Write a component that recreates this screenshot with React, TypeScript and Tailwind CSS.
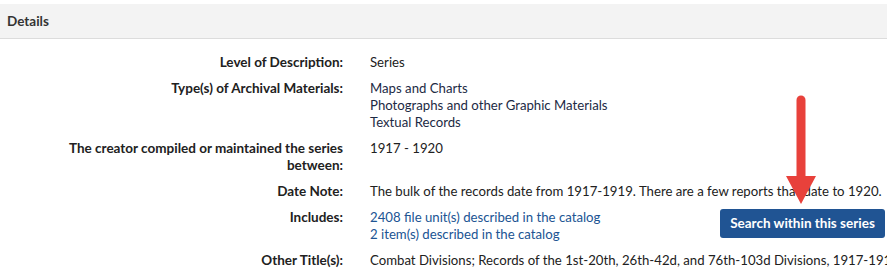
import React from "react";

export default function App() {
  const font = { fontFamily: 'Lato, "Noto Sans", sans-serif' };
  return (
    <div className="relative w-[887px] h-[272px] overflow-hidden bg-white text-[13.2px] leading-[17px] text-[#212121]" style={font}>
      <div className="pt-[4px]">
        <div className="h-[35px] bg-[#f3f3f3] border-b border-[#dcdcdc] flex items-center pl-[7px] pt-[1px] font-bold text-[13.5px] text-[#333]">
          Details
        </div>
      </div>
      <div className="grid grid-cols-[343px_minmax(0,1fr)] gap-x-[27px] gap-y-[9px] pt-[15px]">
        <div className="text-right font-bold text-[13.5px]">Level of Description:</div>
        <div>Series</div>

        <div className="text-right font-bold text-[13.5px]">Type(s) of Archival Materials:</div>
        <div className="text-[#1c2a44]">
          <div>Maps and Charts</div>
          <div>Photographs and other Graphic Materials</div>
          <div>Textual Records</div>
        </div>

        <div className="text-right font-bold text-[13.5px] pl-[50px]">The creator compiled or maintained the series between:</div>
        <div>1917 - 1920</div>

        <div className="text-right font-bold text-[13.5px]">Date Note:</div>
        <div className="whitespace-nowrap">The bulk of the records date from 1917-1919. There are a few reports that date to 1920.</div>

        <div className="text-right font-bold text-[13.5px]">Includes:</div>
        <div className="flex items-start justify-between pr-[2px]">
          <div className="text-[#205493]">
            <div>2408 file unit(s) described in the catalog</div>
            <div>2 item(s) described in the catalog</div>
          </div>
          <button className="h-[29px] w-[165px] shrink-0 whitespace-nowrap rounded-[3px] bg-[#205493] text-white font-bold text-[13.5px]">
            Search within this series
          </button>
        </div>

        <div className="text-right font-bold text-[13.5px]">Other Title(s):</div>
        <div className="whitespace-nowrap overflow-hidden">Combat Divisions; Records of the 1st-20th, 26th-42d, and 76th-103d Divisions, 1917-1919</div>
      </div>
      <svg className="absolute left-0 top-0" width="887" height="272" viewBox="0 0 887 272">
        <line x1="801" y1="100" x2="801" y2="180" stroke="#e8413b" strokeWidth="9" strokeLinecap="round" />
        <polygon points="786,176 816,176 801,204" fill="#e8413b" />
      </svg>
    </div>
  );
}
